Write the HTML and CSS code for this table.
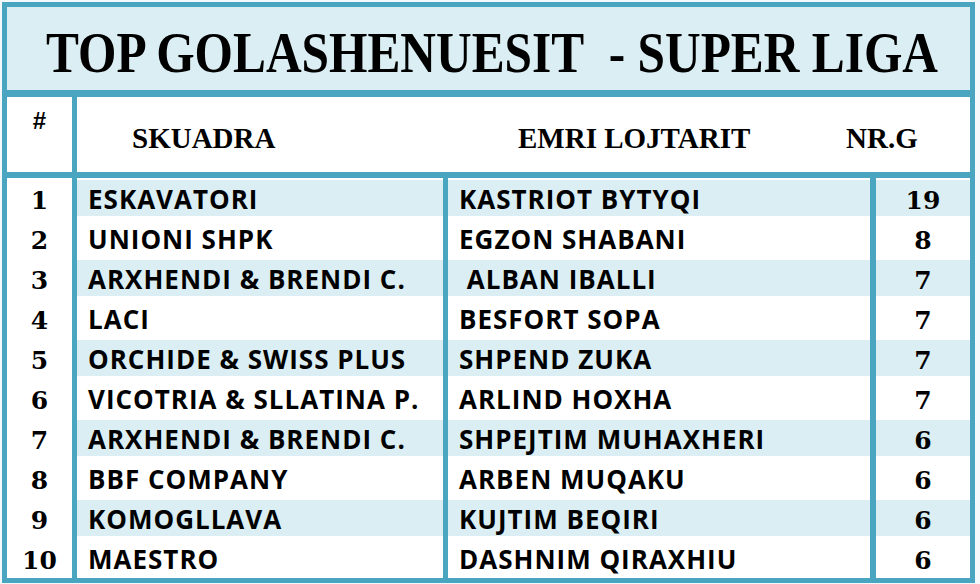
FILE: index.html
```html
<!DOCTYPE html>
<html>
<head>
<meta charset="utf-8">
<link rel="stylesheet" href="styles.css">
</head>
<body>
<div class="frame">
  <div class="title"><span class="title-text">TOP GOLASHENUESIT&nbsp; - SUPER LIGA</span></div>
  <div class="grid">
    <div class="hnum">#</div>
    <div class="hrow">
      <span class="h1">SKUADRA</span>
      <span class="h2">EMRI LOJTARIT</span>
      <span class="h3">NR.G</span>
    </div>

    <div class="num">1</div><div class="team band">ESKAVATORI</div><div class="player band">KASTRIOT BYTYQI</div><div class="goals band">19</div>
    <div class="num">2</div><div class="team">UNIONI SHPK</div><div class="player">EGZON SHABANI</div><div class="goals">8</div>
    <div class="num">3</div><div class="team band">ARXHENDI &amp; BRENDI C.</div><div class="player band">&nbsp;ALBAN IBALLI</div><div class="goals band">7</div>
    <div class="num">4</div><div class="team">LACI</div><div class="player">BESFORT SOPA</div><div class="goals">7</div>
    <div class="num">5</div><div class="team band">ORCHIDE &amp; SWISS PLUS</div><div class="player band">SHPEND ZUKA</div><div class="goals band">7</div>
    <div class="num">6</div><div class="team">VICOTRIA &amp; SLLATINA P.</div><div class="player">ARLIND HOXHA</div><div class="goals">7</div>
    <div class="num">7</div><div class="team band">ARXHENDI &amp; BRENDI C.</div><div class="player band">SHPEJTIM MUHAXHERI</div><div class="goals band">6</div>
    <div class="num">8</div><div class="team">BBF COMPANY</div><div class="player">ARBEN MUQAKU</div><div class="goals">6</div>
    <div class="num">9</div><div class="team band">KOMOGLLAVA</div><div class="player band">KUJTIM BEQIRI</div><div class="goals band">6</div>
    <div class="num">10</div><div class="team">MAESTRO</div><div class="player">DASHNIM QIRAXHIU</div><div class="goals">6</div>
  </div>
</div>
</body>
</html>
```
FILE: styles.css
```css
html, body {
  margin: 0;
  padding: 0;
  background: #f4f9fb;
}
.frame {
  box-sizing: border-box;
  margin: 2px 5px 0 2px;
  width: 973px;
  height: 581px;
  border: 5px solid #4aa6c0;
  background: #ffffff;
  display: flex;
  flex-direction: column;
}
.title {
  height: 83px;
  background: #daeef3;
  border-bottom: 7px solid #4aa6c0;
  box-sizing: content-box;
  display: flex;
  justify-content: center;
  align-items: center;
  overflow: hidden;
}
.title-text {
  display: inline-block;
  font-family: "Liberation Serif", serif;
  font-weight: bold;
  font-size: 57px;
  line-height: 1;
  color: #000;
  white-space: nowrap;
  transform: translate(3px, 4px) scaleX(0.866);
}
.grid {
  display: grid;
  grid-template-columns: 65px 371px 427px 100px;
  grid-template-rows: 81px repeat(10, 40px);
}
.hnum {
  font-family: "Liberation Sans", sans-serif;
  font-weight: bold;
  font-size: 24px;
  text-align: center;
  padding-top: 10px;
  border-bottom: 6px solid #4aa6c0;
}
.hrow {
  grid-column: 2 / 5;
  border-left: 5px solid #4aa6c0;
  border-bottom: 6px solid #4aa6c0;
  display: flex;
  align-items: flex-end;
  padding-bottom: 19px;
  font-family: "Liberation Serif", serif;
  font-weight: bold;
  font-size: 29px;
  line-height: 1;
}
.h1 { margin-left: 55px; width: 386px; }
.h2 { width: 328px; }
.num {
  font-family: "DejaVu Serif", serif;
  font-weight: bold;
  font-size: 25px;
  text-align: center;
  line-height: 35px;
  padding-top: 5px;
}
.team, .player, .goals {
  box-sizing: border-box;
  border-left: 5px solid #4aa6c0;
  line-height: 40px;
  white-space: nowrap;
}
.goals { border-left-width: 6px; }
.team, .player {
  font-family: "Open Sans", sans-serif;
  font-weight: bold;
  font-size: 26px;
  letter-spacing: 1px;
  padding-left: 11px;
  padding-top: 1px;
}
.goals {
  font-family: "DejaVu Serif", serif;
  font-weight: bold;
  font-size: 25px;
  text-align: center;
  padding-top: 5px;
  line-height: 35px;
}
.band {
  background: #daeef3;
}
.team.band, .player.band, .goals.band {
  background-image: linear-gradient(#ffffff 0 2px, #daeef3 2px 38px, #ffffff 38px);
}
```
